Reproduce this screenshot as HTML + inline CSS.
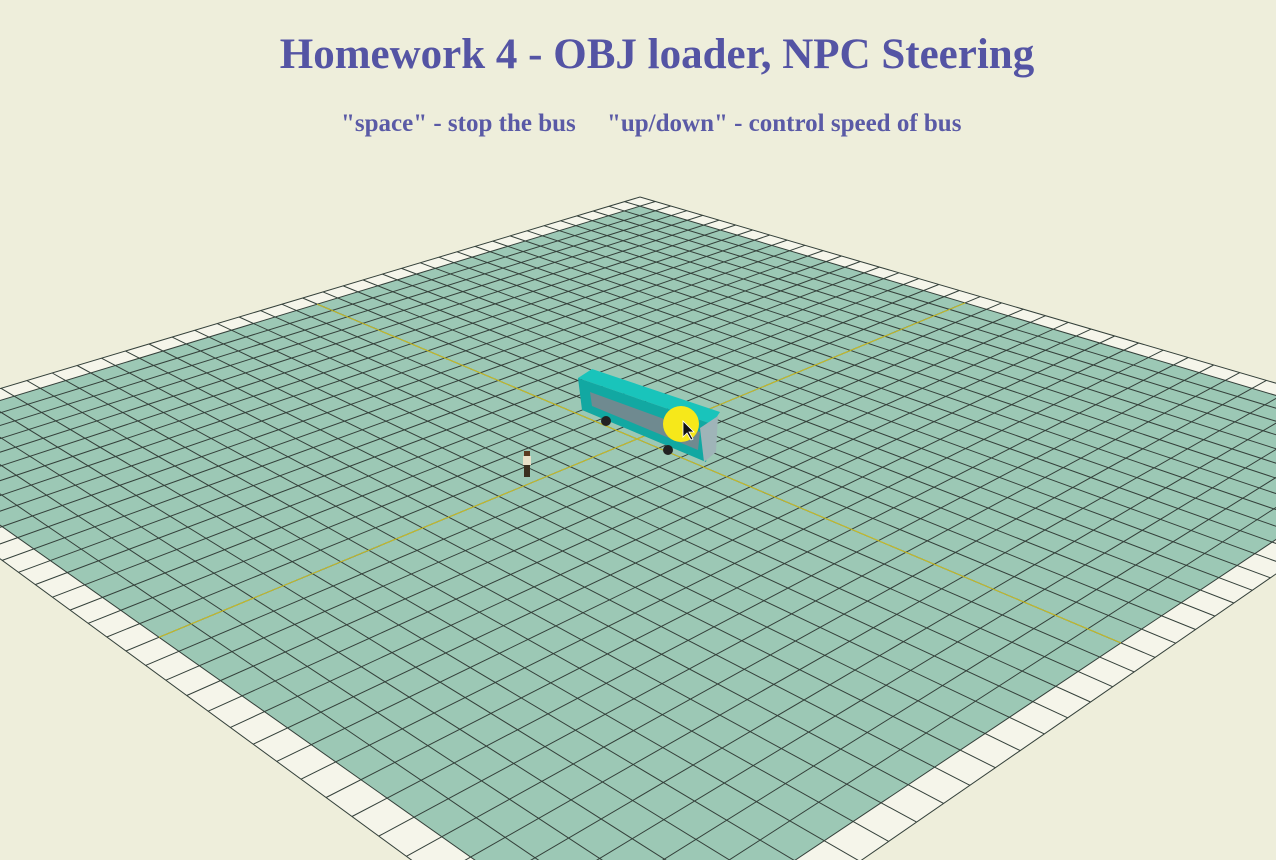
<!DOCTYPE html>
<html><head><meta charset="utf-8">
<style>
html,body{margin:0;padding:0;width:1276px;height:860px;overflow:hidden;background:#eeeedb;font-family:"Liberation Serif",serif;}
h1{position:absolute;top:30px;left:0;right:0;padding-left:38px;text-align:center;margin:0;font-size:43px;font-weight:bold;color:#5454a4;}
.sub{position:absolute;top:110px;left:341px;font-size:25px;font-weight:bold;color:#5a5aa6;white-space:pre;}
svg{position:absolute;left:0;top:0;}
</style></head><body>
<svg id="s" width="1276" height="860" xmlns="http://www.w3.org/2000/svg"></svg>
<h1>Homework 4 - OBJ loader, NPC Steering</h1>
<div class="sub">"space" - stop the bus     "up/down" - control speed of bus</div>
<script>
(function(){
var P=[[640,197],[1470,440],[630,1020],[-165,438]];
var x0=P[0][0],y0=P[0][1],x1=P[1][0],y1=P[1][1],x2=P[2][0],y2=P[2][1],x3=P[3][0],y3=P[3][1];
var dx1=x1-x2,dx2=x3-x2,dy1=y1-y2,dy2=y3-y2,sx=x0-x1+x2-x3,sy=y0-y1+y2-y3;
var den=dx1*dy2-dx2*dy1;
var g=(sx*dy2-dx2*sy)/den,h=(dx1*sy-sx*dy1)/den;
var a=x1-x0+g*x1,b=x3-x0+h*x3,c=x0,d=y1-y0+g*y1,e=y3-y0+h*y3,f=y0;
function M(u,v){var w=g*u+h*v+1;return [(a*u+b*v+c)/w,(d*u+e*v+f)/w];}
var N=38,s='';
function pt(p){return p[0].toFixed(1)+','+p[1].toFixed(1);}
var r=1/N;
s+='<polygon points="'+[M(0,0),M(1,0),M(1,1),M(0,1)].map(pt).join(' ')+'" fill="#f5f5ea"/>';
s+='<polygon points="'+[M(r,r),M(1-r,r),M(1-r,1-r),M(r,1-r)].map(pt).join(' ')+'" fill="#9cc8b5"/>';
for(var i=0;i<=N;i++){var t=i/N;
 var A=M(t,0),B=M(t,1);s+='<line x1="'+A[0].toFixed(1)+'" y1="'+A[1].toFixed(1)+'" x2="'+B[0].toFixed(1)+'" y2="'+B[1].toFixed(1)+'" stroke="#34403a" stroke-width="1"/>';
 A=M(0,t);B=M(1,t);s+='<line x1="'+A[0].toFixed(1)+'" y1="'+A[1].toFixed(1)+'" x2="'+B[0].toFixed(1)+'" y2="'+B[1].toFixed(1)+'" stroke="#34403a" stroke-width="1"/>';
}
var A=M(0.5,r),B=M(0.5,1-r);s+='<line x1="'+A[0]+'" y1="'+A[1]+'" x2="'+B[0]+'" y2="'+B[1]+'" stroke="#d0c020" stroke-width="1"/>';
A=M(r,0.5);B=M(1-r,0.5);s+='<line x1="'+A[0]+'" y1="'+A[1]+'" x2="'+B[0]+'" y2="'+B[1]+'" stroke="#d0c020" stroke-width="1"/>';
// bus
s+='<polygon points="578,378 592,369 720,412 712,424" fill="#19c4bb"/>';
s+='<polygon points="578,378 712,424 706,462 582,410" fill="#12a8a2"/>';
s+='<polygon points="590,392 700,432 698,450 592,406" fill="#6f8a90"/>';
s+='<polygon points="700,428 718,416 716,452 704,462" fill="#9fb4b8"/>';
s+='<circle cx="606" cy="421" r="5" fill="#222"/><circle cx="668" cy="450" r="5" fill="#222"/>';
s+='<circle cx="681" cy="424" r="18" fill="#f6e81a"/>';
s+='<polygon points="683,421 683,437 687,433 691,440 693,439 689,432 694,432" fill="#111" stroke="#fff" stroke-width="0.8"/>';
s+='<rect x="524" y="451" width="6" height="5" fill="#5a3a20"/><rect x="523" y="456" width="8" height="9" fill="#e8e0c8"/><rect x="524" y="465" width="6" height="12" fill="#3a3020"/>';
document.getElementById('s').innerHTML=s;
})();
</script>
</body></html>
